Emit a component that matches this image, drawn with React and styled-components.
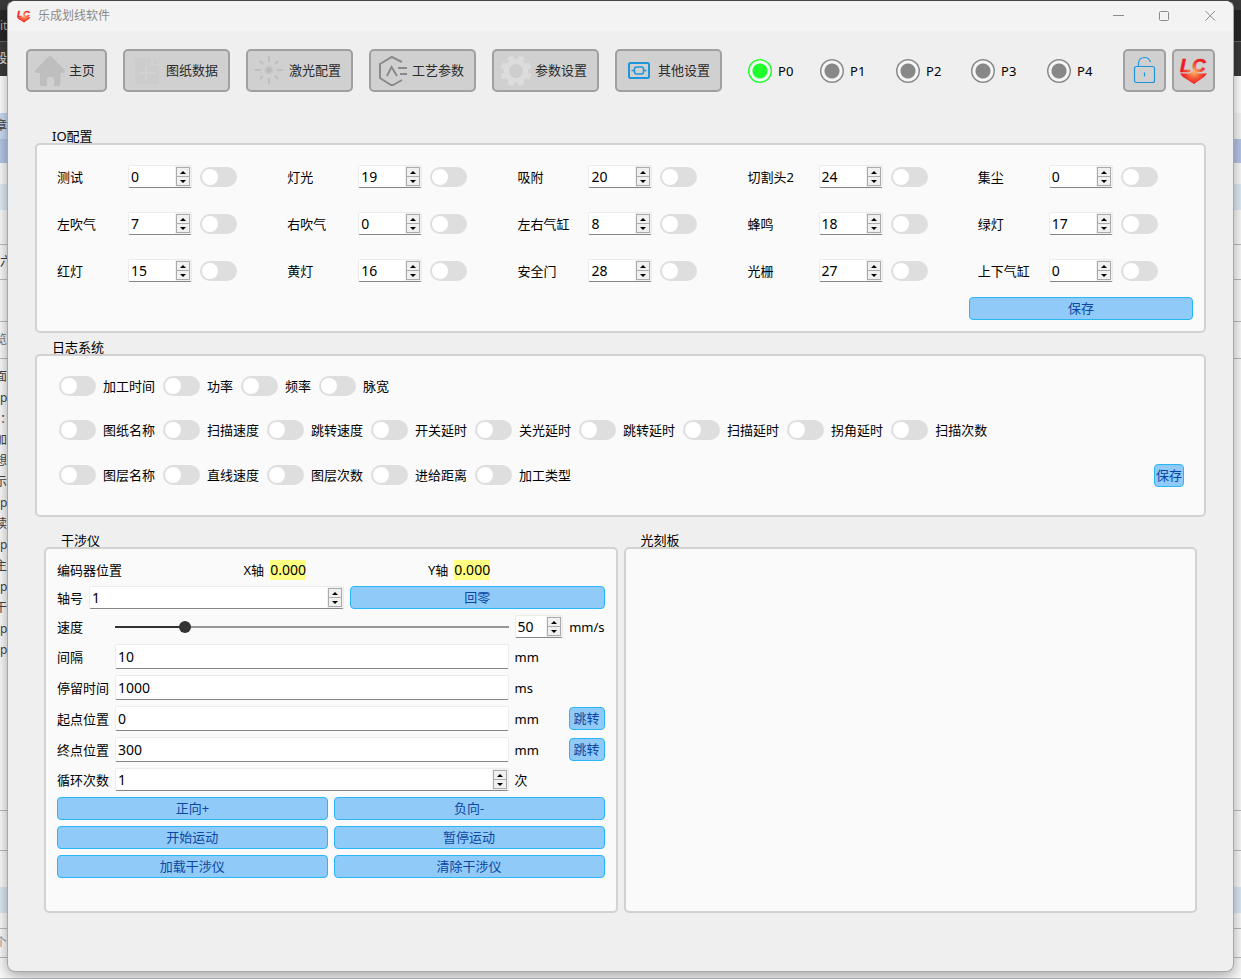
import React, { useId, useState } from "react";
import styled, { createGlobalStyle } from "styled-components";

const GlobalStyle = createGlobalStyle`
  * {
    box-sizing: border-box;
  }

  body {
    margin: 0;
    background: #f4f4f4;
    color: #000;
    font: 13px/18px "Noto Sans", "Noto Sans CJK SC", sans-serif;
  }

  button,
  input {
    font: inherit;
    color: inherit;
  }
`;

const Desktop = styled.div`
  position: relative;
  display: flex;
  min-height: 100vh;
  overflow: hidden;
`;

/* the editor window that shows around the edges */
const Backdrop = styled.div`
  position: absolute;
  inset: 0;
  overflow: hidden;
`;

const BackdropRow = styled.div`
  display: flex;
  align-items: center;
  height: ${(p) => p.$height}px;
  background: ${(p) => p.$bg || "#fafafa"};
  color: ${(p) => p.$color || "#444"};
  font-size: 12px;
  border-bottom: ${(p) => (p.$line ? `1px solid ${p.$line}` : "none")};

  span {
    display: flex;
    width: 7px;
    overflow: hidden;
    white-space: nowrap;
    justify-content: ${(p) => (p.$end ? "flex-end" : "flex-start")};
  }
`;

const Window = styled.div`
  position: relative;
  display: flex;
  flex-direction: column;
  flex: 1;
  min-width: 0;
  margin: 0 7px 7px;
  border: 1px solid #a8a8a8;
  border-top-color: #444;
  border-radius: 8px;
  background: #efefef;
  overflow: hidden;
  box-shadow: 0 4px 14px rgba(0, 0, 0, 0.35);
`;

const TitleBar = styled.header`
  display: flex;
  align-items: center;
  height: 30px;
  padding-left: 9px;
  background: #f3f3f3;
  color: #8a8a8a;

  h1 {
    flex: 1;
    margin: 0 0 0 7px;
    font-size: 12px;
    font-weight: normal;
    line-height: 18px;
  }
`;

const CaptionButton = styled.button`
  display: flex;
  align-items: center;
  justify-content: center;
  width: 46px;
  height: 30px;
  padding: 0;
  border: none;
  background: none;
`;

const Toolbar = styled.nav`
  display: flex;
  gap: 16px;
  padding: 18px 18px 0;
`;

const ToolButton = styled.button`
  display: flex;
  align-items: center;
  gap: 4px;
  height: 43px;
  padding: 0 10px 0 7px;
  border: 2px solid #a0a0a0;
  border-radius: 5px;
  background: #d0d0d0;
  color: #2b2b2b;
  line-height: 17px;
  white-space: nowrap;
`;

const SquareButton = styled(ToolButton)`
  justify-content: center;
  width: 43px;
  padding: 0;
`;

const SquareButtons = styled.div`
  display: flex;
  gap: 6px;
`;

const StatusList = styled.div`
  display: grid;
  grid-template-columns: 72fr 76fr 75fr 76fr 76fr;
  align-items: center;
  flex: 1;
  margin: 0 -16px 0 10px;

  label {
    display: flex;
    align-items: center;
    gap: 6px;
  }
`;

const StatusLight = styled.input`
  appearance: none;
  width: 24px;
  height: 24px;
  margin: 0;
  border-radius: 50%;
  color: #888;
  background: radial-gradient(
    circle,
    currentColor 7px,
    #f6f6f6 8px 10px,
    currentColor 11px
  );

  &:checked {
    color: #1eff2b;
  }
`;

const Content = styled.main`
  display: flex;
  flex-direction: column;
  flex: 1;
  padding: 34px 27px 58px;
`;

const Group = styled.section`
  display: flex;
  flex-direction: column;
  flex: ${(p) => (p.$grow ? "1 1 0" : "none")};
  min-width: 0;
  margin-top: ${(p) => p.$top || 0}px;

  > h2 {
    height: 17px;
    margin: 0;
    padding-left: 17px;
    font-size: 13px;
    font-weight: normal;
    line-height: 20px;
  }
`;

const Frame = styled.div`
  flex: 1;
  padding: 11px;
  border: 2px solid #d2d2d2;
  border-radius: 5px;
  background: #fafafa;
`;

const PanelRow = styled.div`
  display: flex;
  flex: 1;
  gap: 6px;
  margin: 13px 9px 0;
`;

const BlueButton = styled.button`
  flex: ${(p) => (p.$width ? "none" : "1 1 0")};
  width: ${(p) => (p.$width ? `${p.$width}px` : "auto")};
  height: 23px;
  padding: 0;
  border: 1px solid #29b6f6;
  border-radius: 4px;
  background: #90caf9;
  color: #0d47a1;
  line-height: 21px;
  white-space: nowrap;
`;

const Switch = styled.input`
  appearance: none;
  flex: none;
  width: 37px;
  height: 20px;
  margin: 0;
  padding: 2px;
  border-radius: 10px;
  background: #dedede;

  &::before {
    content: "";
    display: block;
    width: 16px;
    height: 16px;
    border-radius: 50%;
    background: #fff;
  }

  &:checked {
    background: #29b6f6;
  }

  &:checked::before {
    margin-left: 17px;
  }
`;

const TextField = styled.input`
  width: 100%;
  min-width: 0;
  height: 25px;
  padding: 0 2px;
  border: 1px solid #ececec;
  border-bottom-color: #868686;
  border-radius: 2px;
  background: #fff;
  font-size: 14px;
  outline: none;
`;

const SpinBox = styled.div`
  display: flex;
  flex: ${(p) => (p.$width ? "none" : "1 1 0")};
  width: ${(p) => (p.$width ? `${p.$width}px` : "auto")};
  min-width: 0;
  height: 23px;
  border: 1px solid #ececec;
  border-bottom-color: #868686;
  border-radius: 2px;
  background: #fff;

  input {
    flex: 1;
    width: 0;
    padding: 0 2px;
    border: none;
    background: none;
    font-size: 14px;
    outline: none;
  }
`;

const SpinArrows = styled.div`
  display: flex;
  flex-direction: column;
  padding: 1px;
  background: #f0f0f0;
`;

const ArrowButton = styled.button`
  display: flex;
  align-items: center;
  justify-content: center;
  width: 14px;
  height: 10px;
  padding: 0;
  border: 1px solid #ababab;
  background: #f0f0f0;

  & + & {
    height: 9px;
    border-top: none;
  }
`;

const IoGrid = styled.div`
  display: grid;
  grid-template-columns: repeat(5, 1fr);
  grid-auto-rows: minmax(23px, auto);
  gap: 6px;
`;

const IoCell = styled.div`
  display: flex;
  align-items: center;
  height: 41px;
  padding-left: 9px;

  label {
    width: 71px;
    white-space: nowrap;
  }

  ${Switch} {
    margin-left: 8px;
  }
`;

const SaveCell = styled.div`
  display: flex;
  grid-column: 5;
`;

const LogRows = styled.div`
  display: flex;
  flex-direction: column;
  gap: 6px;
  padding: 0 9px 9px 11px;
`;

const LogRow = styled.div`
  display: flex;
  align-items: center;
  gap: 8px;
  height: ${(p) => (p.$last ? 40 : 38)}px;

  label {
    display: flex;
    align-items: center;
    gap: 7px;
    white-space: nowrap;
  }

  ${BlueButton} {
    margin-left: auto;
  }
`;

const Form = styled.form`
  display: flex;
  flex-direction: column;
  gap: 6px;
`;

const EncoderRow = styled.div`
  display: grid;
  grid-template-columns: repeat(3, 1fr);
  gap: 6px;
  line-height: 20px;

  > div {
    display: flex;
    gap: 6px;
    padding-left: 2px;
  }

  > div:first-child {
    padding-left: 0;
  }
`;

const Reading = styled.output`
  background: #ffff80;
  font-size: 14px;
`;

const Line = styled.div`
  display: flex;
  align-items: center;
  gap: 6px;
`;

const FieldRow = styled.div`
  display: grid;
  grid-template-columns: 52px 1fr 90px;
  align-items: center;
  gap: 6px;
`;

const Unit = styled.div`
  display: flex;
  align-items: center;
  justify-content: space-between;
`;

const Slider = styled.input`
  appearance: none;
  width: 100%;
  height: 20px;
  margin: 0;
  background: transparent;

  &::-webkit-slider-runnable-track {
    height: 2px;
    background: linear-gradient(
      to right,
      #333 ${(p) => p.$percent}%,
      #969696 ${(p) => p.$percent}%
    );
  }

  &::-webkit-slider-thumb {
    appearance: none;
    width: 12px;
    height: 12px;
    margin-top: -5px;
    border-radius: 50%;
    background: #333;
  }
`;

const Logo = ({ size }) => {
  const id = useId();
  return (
    <svg width={size} height={size} viewBox="0 0 28 28" aria-hidden="true">
      <defs>
        <radialGradient id={id} gradientUnits="userSpaceOnUse" cx="14" cy="15" r="12">
          <stop offset="0" stopColor="#ffb765" />
          <stop offset="0.5" stopColor="#f4623a" />
          <stop offset="1" stopColor="#ee1c24" />
        </radialGradient>
      </defs>
      <g
        fill={`url(#${id})`}
        stroke={`url(#${id})`}
        strokeWidth="0.6"
        fontFamily="Liberation Sans, sans-serif"
        fontSize="19"
        fontWeight="bold"
        fontStyle="italic"
      >
        <text x="0" y="15">L</text>
        <text x="12" y="15">C</text>
      </g>
      <path d="M0 16.500H10L14 13.500L18 16.500H27L24 20L14 27L3 20Z" fill={`url(#${id})`} />
    </svg>
  );
};

const ToolIcon = ({ children }) => (
  <svg width="30" height="30" viewBox="0 0 30 30" fill="none" aria-hidden="true">
    {children}
  </svg>
);

const HomeIcon = () => (
  <ToolIcon>
    <path
      d="M13.500 .7Q15 -.5 16.500 .7L29.300 13.500Q31 17 28 17H25.500V28Q25.500 30 23.500 30H19V22.500Q19 21 17.500 21H13.500Q12 21 12 22.500V30H7Q5 30 5 28V17H2Q-1 17 .7 13.500Z"
      fill="#bebebe"
    />
  </ToolIcon>
);

const DrawingIcon = () => (
  <ToolIcon>
    <path d="M5 2H20L27 9V26Q27 28 25 28H5Q3 28 3 26V4Q3 2 5 2Z" fill="#cccccc" />
    <path d="M20 2V9H27M7 17H23M14 9V24" stroke="#d2d2d2" strokeWidth="2" />
  </ToolIcon>
);

const LaserIcon = () => (
  <ToolIcon>
    <circle cx="14" cy="14" r="3" fill="#bcbcbc" />
    <circle cx="14" cy="14" r="4" stroke="#c6c6c6" />
    <path
      d="M14 0V6M14 22V28M0 14H6M22 14H28M5 5L8 8M20 20L23 23M23 5L20 8M8 20L5 23"
      stroke="#bebebe"
      strokeWidth="2"
    />
  </ToolIcon>
);

const CraftIcon = () => (
  <ToolIcon>
    <path
      d="M24 6L14 1Q13 1 12 2L2 8V22L13 29Q14 29 15 29L24 24"
      stroke="#8a8a8a"
      strokeWidth="2"
    />
    <path d="M9 20L13.500 11L19 20M20 12H29M22 18H29" stroke="#8a8a8a" strokeWidth="2" />
  </ToolIcon>
);

const GearIcon = () => (
  <ToolIcon>
    <circle cx="15" cy="15" r="12" fill="#dcdcdc" />
    {[22.5, 67.5, 112.5, 157.5].map((angle) => (
      <rect
        key={angle}
        x="12"
        y="-0.5"
        width="6"
        height="31"
        rx="1.500"
        fill="#dcdcdc"
        transform={`rotate(${angle} 15 15)`}
      />
    ))}
    <circle cx="15" cy="15" r="7" fill="#cecece" />
  </ToolIcon>
);

const OtherIcon = () => (
  <ToolIcon>
    <g stroke="#1e96dc">
      <rect x="5" y="7" width="20" height="15" rx="1.500" strokeWidth="2" />
      <rect x="10.500" y="11" width="9" height="7" rx="2" strokeWidth="1.500" />
      <path d="M7.500 14.500H10.500M19.500 14.500H22.500" strokeWidth="1.500" />
    </g>
  </ToolIcon>
);

const LockIcon = () => (
  <ToolIcon>
    <g stroke="#1e96dc" strokeWidth="1.200">
      <rect x="4.500" y="10.500" width="20" height="16" rx="2" />
      <path d="M8.500 10.500V7Q9 1.500 14.500 1.500Q19 1.500 20.500 6M14.500 16.500V20.500" />
    </g>
  </ToolIcon>
);

const SpinInput = ({ id, label, initial, width }) => {
  const [value, setValue] = useState(initial);
  const step = (by) => setValue((v) => Number(v) + by);

  return (
    <SpinBox $width={width}>
      <input
        id={id}
        aria-label={label}
        inputMode="numeric"
        value={value}
        onChange={(e) => setValue(e.target.value)}
      />
      <SpinArrows>
        <ArrowButton type="button" aria-label="增加" onClick={() => step(1)}>
          <svg width="6" height="3" viewBox="0 0 6 3">
            <path d="M0 3L3 0L6 3Z" />
          </svg>
        </ArrowButton>
        <ArrowButton type="button" aria-label="减少" onClick={() => step(-1)}>
          <svg width="6" height="3" viewBox="0 0 6 3">
            <path d="M0 0H6L3 3Z" />
          </svg>
        </ArrowButton>
      </SpinArrows>
    </SpinBox>
  );
};

const backdropRows = [
  { height: 10, bg: "#3a3a3a" },
  { height: 32, bg: "#272727", text: "it", color: "#aaa", line: "#666" },
  { height: 34, bg: "#3a3a3a", text: "段", color: "#eee", end: true },
  { height: 37, bg: "#fff" },
  { height: 26, bg: "linear-gradient(to right, #c9daf3 50%, #f6f6f6 50%)", text: "章", end: true },
  { height: 24, bg: "#b4c7e6" },
  { height: 21 },
  { height: 26, bg: "#e0ebf5" },
  { height: 35, line: "#bbb" },
  { height: 35, text: "六", line: "#bbb" },
  { height: 42, line: "#bbb" },
  { height: 37, text: "览", color: "#777", end: true, line: "#bbb" },
  { height: 7 },
  ...["面", "ps", "：", "加", "想", "示", "ps", "读", "ps", "主", "ps", "干", "ps", "ps"].map(
    (text) => ({ height: 21, text, end: text !== "：" && text !== "ps" })
  ),
  { height: 151, line: "#bbb" },
  { height: 40, line: "#bbb" },
  { height: 36 },
  { height: 26, bg: "#dce8f4" },
  { height: 16, line: "#bbb" },
  { height: 29, text: "个", color: "#999", end: true, line: "#bbb" },
  { height: 21, line: "#b8c4cc" },
];

const tools = [
  { name: "主页", Icon: HomeIcon },
  { name: "图纸数据", Icon: DrawingIcon },
  { name: "激光配置", Icon: LaserIcon },
  { name: "工艺参数", Icon: CraftIcon },
  { name: "参数设置", Icon: GearIcon },
  { name: "其他设置", Icon: OtherIcon },
];

const ioPorts = [
  ["测试", 0],
  ["灯光", 19],
  ["吸附", 20],
  ["切割头2", 24],
  ["集尘", 0],
  ["左吹气", 7],
  ["右吹气", 0],
  ["左右气缸", 8],
  ["蜂鸣", 18],
  ["绿灯", 17],
  ["红灯", 15],
  ["黄灯", 16],
  ["安全门", 28],
  ["光栅", 27],
  ["上下气缸", 0],
];

const logRows = [
  ["加工时间", "功率", "频率", "脉宽"],
  [
    "图纸名称",
    "扫描速度",
    "跳转速度",
    "开关延时",
    "关光延时",
    "跳转延时",
    "扫描延时",
    "拐角延时",
    "扫描次数",
  ],
  ["图层名称", "直线速度", "图层次数", "进给距离", "加工类型"],
];

const fields = [
  { id: "interval", label: "间隔", value: "10", unit: "mm" },
  { id: "dwell", label: "停留时间", value: "1000", unit: "ms" },
  { id: "start", label: "起点位置", value: "0", unit: "mm", jump: true },
  { id: "end", label: "终点位置", value: "300", unit: "mm", jump: true },
];

const actions = [
  ["正向+", "负向-"],
  ["开始运动", "暂停运动"],
  ["加载干涉仪", "清除干涉仪"],
];

function Interferometer() {
  const [speed, setSpeed] = useState(50);

  return (
    <Form onSubmit={(e) => e.preventDefault()}>
      <EncoderRow>
        <div>编码器位置</div>
        <div>
          X轴 <Reading>0.000</Reading>
        </div>
        <div>
          Y轴 <Reading>0.000</Reading>
        </div>
      </EncoderRow>
      <Line>
        <label htmlFor="axis">轴号</label>
        <SpinInput id="axis" initial={1} />
        <BlueButton type="button">回零</BlueButton>
      </Line>
      <FieldRow>
        <label htmlFor="speed">速度</label>
        <Slider
          id="speed"
          type="range"
          min="0"
          max="300"
          value={speed}
          $percent={(speed / 300) * 100}
          onChange={(e) => setSpeed(Number(e.target.value))}
        />
        <Unit>
          <SpinInput key={speed} label="速度" initial={speed} width={48} />
          <span>mm/s</span>
        </Unit>
      </FieldRow>
      {fields.map((field) => (
        <FieldRow key={field.id}>
          <label htmlFor={field.id}>{field.label}</label>
          <TextField id={field.id} defaultValue={field.value} />
          <Unit>
            <span>{field.unit}</span>
            {field.jump && (
              <BlueButton type="button" $width={36}>
                跳转
              </BlueButton>
            )}
          </Unit>
        </FieldRow>
      ))}
      <FieldRow>
        <label htmlFor="loops">循环次数</label>
        <SpinInput id="loops" initial={1} />
        <Unit>次</Unit>
      </FieldRow>
      {actions.map((pair) => (
        <Line key={pair[0]}>
          {pair.map((name) => (
            <BlueButton key={name} type="button">
              {name}
            </BlueButton>
          ))}
        </Line>
      ))}
    </Form>
  );
}

function App() {
  return (
    <Desktop>
      <GlobalStyle />
      <Backdrop aria-hidden="true">
        {backdropRows.map((row, index) => (
          <BackdropRow
            key={index}
            $height={row.height}
            $bg={row.bg}
            $color={row.color}
            $line={row.line}
            $end={row.end}
          >
            {row.text && <span>{row.text}</span>}
          </BackdropRow>
        ))}
      </Backdrop>

      <Window>
        <TitleBar>
          <Logo size={14} />
          <h1>乐成划线软件</h1>
          <CaptionButton aria-label="最小化">
            <svg width="11" height="11" stroke="currentColor">
              <path d="M0 4.500H11" />
            </svg>
          </CaptionButton>
          <CaptionButton aria-label="最大化">
            <svg width="11" height="11" stroke="currentColor" fill="none">
              <rect x="0.500" y="0.500" width="9" height="9" rx="1" />
            </svg>
          </CaptionButton>
          <CaptionButton aria-label="关闭">
            <svg width="11" height="11" stroke="currentColor">
              <path d="M0.500 0L10 9.500M10 0L0.500 9.500" />
            </svg>
          </CaptionButton>
        </TitleBar>

        <Toolbar>
          {tools.map(({ name, Icon }) => (
            <ToolButton key={name} type="button">
              <Icon />
              {name}
            </ToolButton>
          ))}
          <StatusList>
            {["P0", "P1", "P2", "P3", "P4"].map((name, index) => (
              <label key={name}>
                <StatusLight type="radio" name="position" defaultChecked={index === 0} />
                {name}
              </label>
            ))}
          </StatusList>
          <SquareButtons>
            <SquareButton type="button" aria-label="解锁">
              <LockIcon />
            </SquareButton>
            <SquareButton type="button" aria-label="关于">
              <Logo size={28} />
            </SquareButton>
          </SquareButtons>
        </Toolbar>

        <Content>
          <Group>
            <h2>IO配置</h2>
            <Frame>
              <IoGrid>
                {ioPorts.map(([name, port], index) => (
                  <IoCell key={name}>
                    <label htmlFor={`io-${index}`}>{name}</label>
                    <SpinInput id={`io-${index}`} initial={port} width={64} />
                    <Switch type="checkbox" aria-label={name} />
                  </IoCell>
                ))}
                <SaveCell>
                  <BlueButton type="button">保存</BlueButton>
                </SaveCell>
              </IoGrid>
            </Frame>
          </Group>

          <Group $top={4}>
            <h2>日志系统</h2>
            <Frame>
              <LogRows>
                {logRows.map((row, index) => (
                  <LogRow key={index} $last={index === 2}>
                    {row.map((name) => (
                      <label key={name}>
                        <Switch type="checkbox" />
                        {name}
                      </label>
                    ))}
                    {index === 2 && (
                      <BlueButton type="button" $width={30}>
                        保存
                      </BlueButton>
                    )}
                  </LogRow>
                ))}
              </LogRows>
            </Frame>
          </Group>

          <PanelRow>
            <Group $grow>
              <h2>干涉仪</h2>
              <Frame>
                <Interferometer />
              </Frame>
            </Group>
            <Group $grow>
              <h2>光刻板</h2>
              <Frame />
            </Group>
          </PanelRow>
        </Content>
      </Window>
    </Desktop>
  );
}

export default App;
